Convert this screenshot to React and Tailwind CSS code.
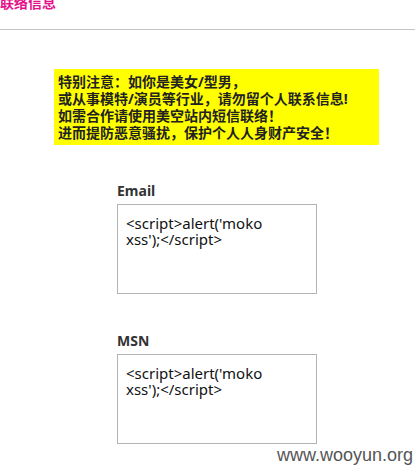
import React from 'react';

const Field = ({ label, value }) => (
  <div>
    <p className="text-[14px] font-bold leading-[20px] text-[#333]">{label}</p>
    <div className="mt-[3px] h-[90px] w-[200px] border border-[#b4b4b4] bg-white px-[8px] pt-[10px] text-[15px] leading-[16px] text-[#111]">
      {value.map((line) => (
        <div key={line}>{line}</div>
      ))}
    </div>
  </div>
);

const App = () => {
  const code = ["<script>alert('moko", "xss');</script>"];

  return (
    <div
      className="relative h-[467px] w-[415px] overflow-hidden bg-white"
      style={{ fontFamily: '"Noto Sans", "Noto Sans CJK SC", sans-serif' }}
    >
      <div className="flex h-[30px] items-start border-b border-[#c3c3c3]">
        <h1 className="-mt-[7px] text-[14px] font-bold leading-[20px] text-[#e5108a]">联络信息</h1>
      </div>

      <div className="ml-[54px] mt-[39px] w-[325px] bg-[#ffff00] px-[4px] py-[4px] text-[14px] font-bold leading-[17px] text-[#222]">
        <p>特别注意：如你是美女/型男，</p>
        <p>或从事模特/演员等行业，请勿留个人联系信息!</p>
        <p>如需合作请使用美空站内短信联络！</p>
        <p>进而提防恶意骚扰，保护个人人身财产安全！</p>
      </div>

      <div className="ml-[117px] mt-[36px] flex flex-col gap-[37px]">
        <Field label="Email" value={code} />
        <Field label="MSN" value={code} />
      </div>

      <span className="absolute bottom-[1px] right-[2px] text-[18px] leading-[22px] text-[#555]" style={{ fontFamily: '"Liberation Sans", sans-serif' }}>
        www.wooyun.org
      </span>
    </div>
  );
};

export default App;
